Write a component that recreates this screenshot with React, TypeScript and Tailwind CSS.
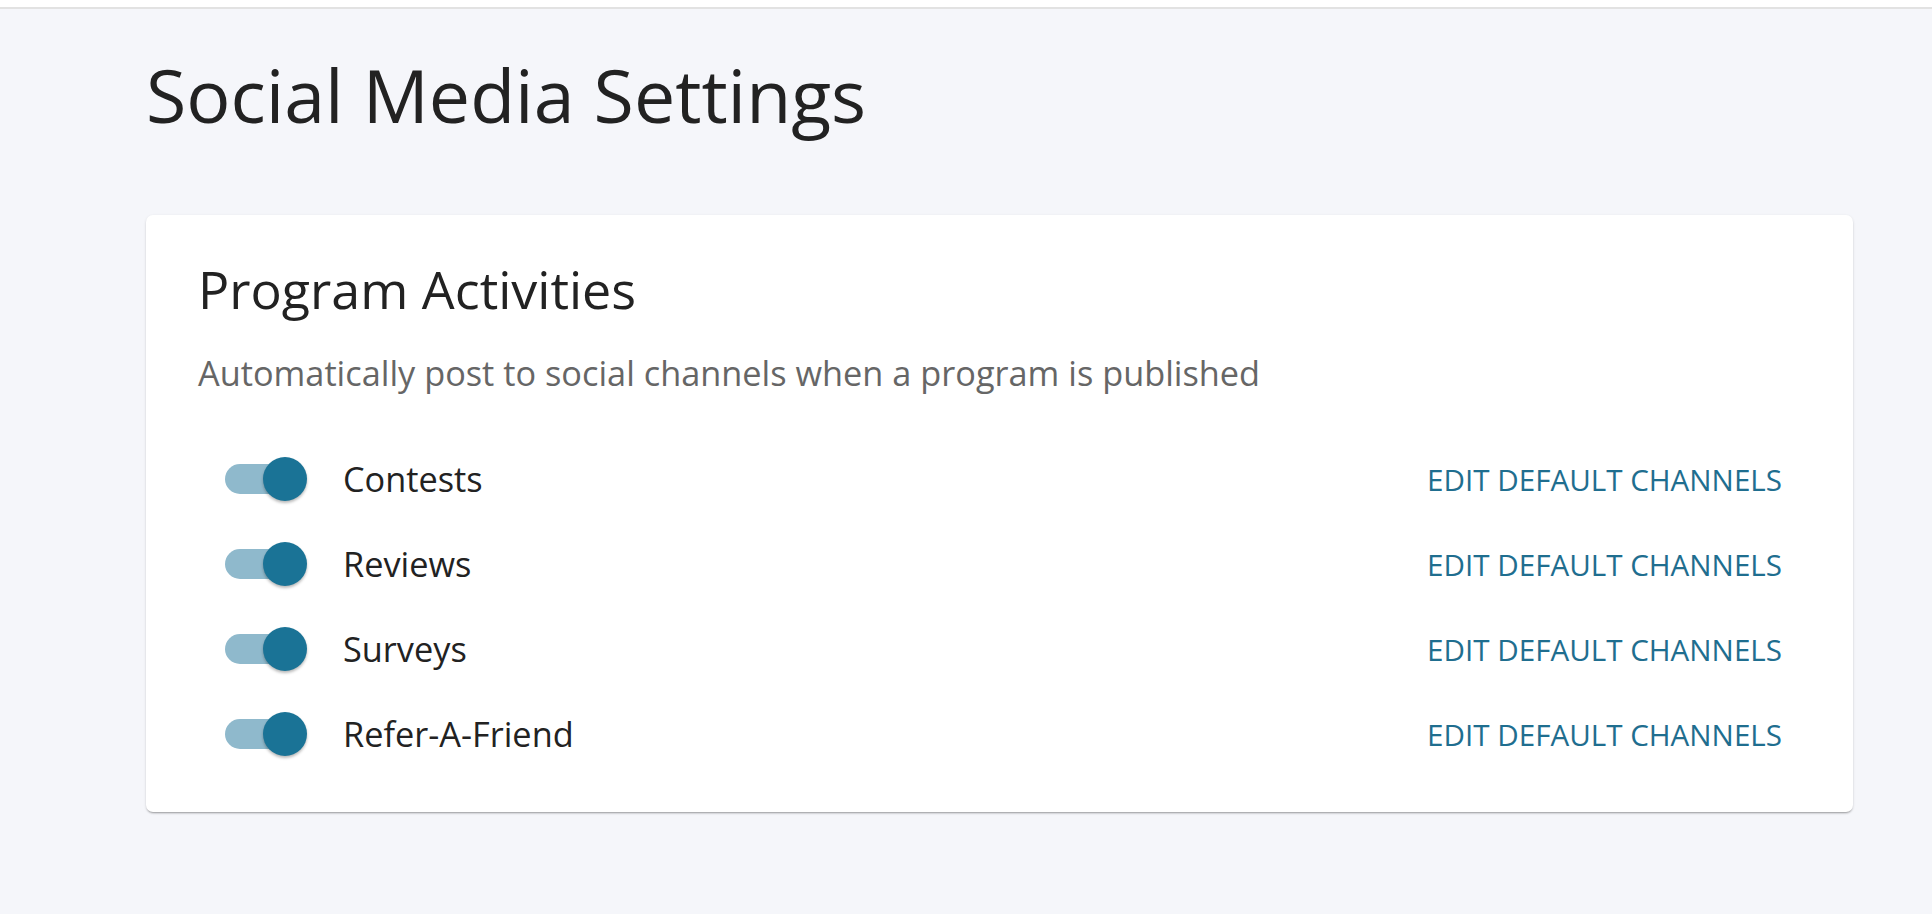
import React from 'react';

const activities = ['Contests', 'Reviews', 'Surveys', 'Refer-A-Friend'];

const Toggle: React.FC = () => (
  <div className="relative w-[82px] h-[44px] shrink-0">
    <div className="absolute left-0 top-[7px] w-[70px] h-[30px] rounded-full bg-[#8fb9cc]" />
    <div className="absolute right-0 top-0 w-[44px] h-[44px] rounded-full bg-[#1a7396] shadow-[0_2px_3px_rgba(0,0,0,0.28)]" />
  </div>
);

export default function App() {
  return (
    <div className="min-h-screen bg-[#f5f6fa] font-['Open_Sans',sans-serif]">
      <div className="h-[9px] bg-white border-b-2 border-[#e2e2e2]" />
      <div className="pl-[146px] pr-[79px]">
        <h1 className="mt-[49px] text-[73.5px] leading-none font-normal text-[#222]">Social Media Settings</h1>
        <div className="mt-[83px] bg-white rounded-[7px] shadow-[0_2px_2px_-1px_rgba(0,0,0,0.3),0_1px_3px_0_rgba(0,0,0,0.12)] pl-[52px] pr-[52px] pt-[48px] pb-[35px]">
          <h2 className="text-[52px] leading-none font-normal text-[#222]">Program Activities</h2>
          <p className="mt-[41px] text-[34.3px] leading-none text-[#666]">
            Automatically post to social channels when a program is published
          </p>
          <div className="mt-[47px] flex flex-col">
            {activities.map((name) => (
              <div key={name} className="h-[85px] flex items-center pl-[27px] pr-[19px]">
                <Toggle />
                <span className="ml-[36px] text-[34.3px] leading-none text-[#222]">{name}</span>
                <button className="ml-auto text-[29.6px] leading-none text-[#1f6e8f] uppercase">
                  Edit Default Channels
                </button>
              </div>
            ))}
          </div>
        </div>
      </div>
    </div>
  );
}
